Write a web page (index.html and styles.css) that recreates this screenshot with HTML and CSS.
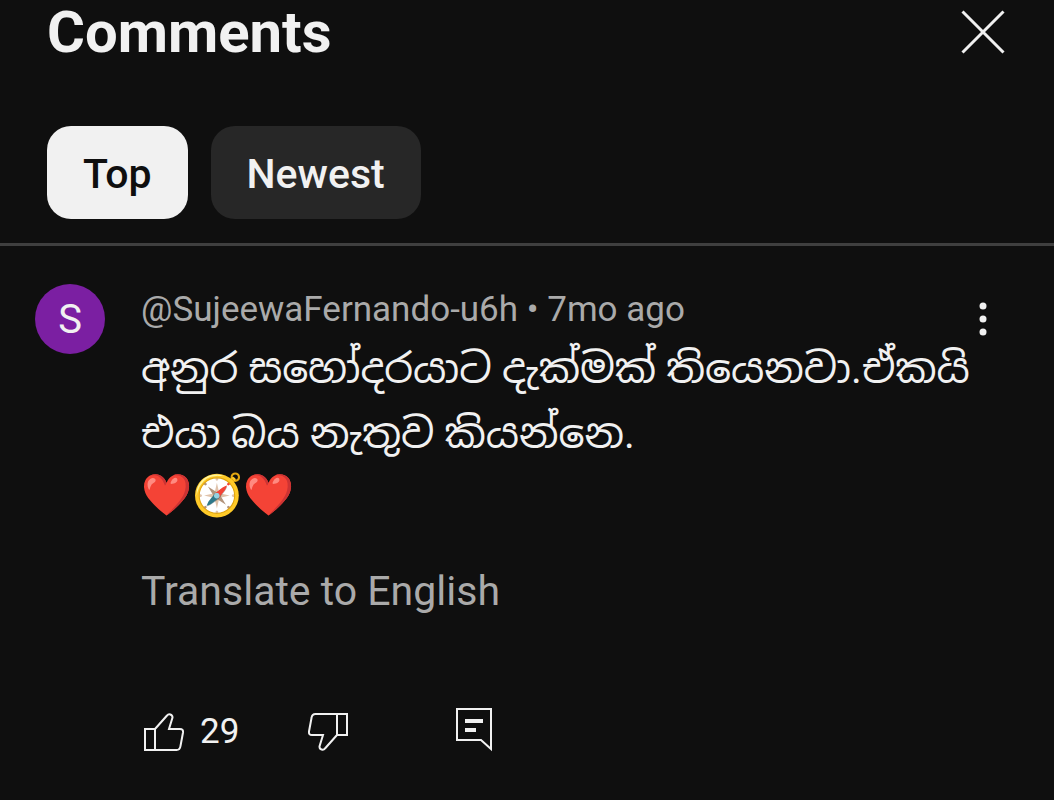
FILE: index.html
```html
<!DOCTYPE html>
<html lang="en">
<head>
    <meta charset="UTF-8">
    <meta name="viewport" content="width=device-width, initial-scale=1.0">
    <title>Comments</title>
    <link rel="stylesheet" href="styles.css">
</head>
<body>
    <header class="panel-header">
        <div class="title-row">
            <h1>Comments</h1>
            <button class="icon-button" aria-label="Close">
                <svg width="44" height="44" viewBox="0 0 44 44" fill="none" stroke="currentColor" stroke-width="3">
                    <path d="M1.5 1.5L42.5 42.5M42.5 1.5L1.5 42.5"/>
                </svg>
            </button>
        </div>
        <div class="chips">
            <button class="chip selected">Top</button>
            <button class="chip">Newest</button>
        </div>
    </header>

    <main>
        <article class="comment">
            <div class="avatar">S</div>
            <div class="comment-body">
                <p class="meta">@SujeewaFernando-u6h • 7mo ago</p>
                <p class="text" lang="si">අනුර සහෝදරයාට දැක්මක් තියෙනවා.ඒකයි<br>එයා බය නැතුව කියන්නෙ.</p>
                <p class="emoji">❤️🧭❤️</p>
                <button class="translate">Translate to English</button>
                <div class="actions">
                    <button class="action like" aria-label="Like, 29">
                        <svg width="40" height="38" viewBox="0 0 40 38" fill="none" stroke="currentColor" stroke-width="2">
                            <path d="M1 16H11V37H1ZM11 16L23 2.5C24.5 .5 28.5 1 28.5 4.5L25 16H36Q39.5 16 39 19.5L36.5 33Q36 37 32.5 37H11"/>
                        </svg>
                        <span>29</span>
                    </button>
                    <button class="action dislike" aria-label="Dislike">
                        <svg width="40" height="38" viewBox="0 0 40 38" fill="none" stroke="currentColor" stroke-width="2">
                            <path d="M39 22H29V1H39ZM29 22L17 35.5C15.5 37.5 11.5 37 11.5 33.5L15 22H4Q.5 22 1 18.5L3.5 5Q4 1 7.5 1H29"/>
                        </svg>
                    </button>
                    <button class="action reply" aria-label="Reply">
                        <svg width="36" height="44" viewBox="0 0 36 44" fill="none" stroke="currentColor" stroke-width="2">
                            <path d="M1 1H35V41L25 32H1Z"/>
                            <path d="M9 13H27M9 22H20" stroke-width="4"/>
                        </svg>
                    </button>
                </div>
            </div>
            <button class="icon-button more" aria-label="More options">
                <svg width="8" height="34" viewBox="0 0 8 34" fill="currentColor">
                    <circle cx="4" cy="4" r="3.5"/>
                    <circle cx="4" cy="17" r="3.5"/>
                    <circle cx="4" cy="30" r="3.5"/>
                </svg>
            </button>
        </article>
    </main>
</body>
</html>
```
FILE: styles.css
```css
* {
    box-sizing: border-box;
}

body {
    margin: 0;
    background: #0f0f0f;
    color: #f1f1f1;
    font-family: Roboto, "Noto Sans Sinhala", "Noto Sans", sans-serif;
}

h1,
p {
    margin: 0;
}

button {
    padding: 0;
    border: none;
    background: none;
    color: inherit;
    font: inherit;
    cursor: pointer;
}

svg {
    display: block;
}

.panel-header {
    padding: 0 49px 24px 47px;
    border-bottom: 3px solid #3f3f3f;
}

.title-row {
    display: flex;
    justify-content: space-between;
    align-items: center;
    height: 64px;
}

h1 {
    font-size: 58px;
    line-height: 62px;
    font-weight: 700;
}

.chips {
    display: flex;
    gap: 23px;
    margin-top: 62px;
}

.chip {
    height: 93px;
    padding: 3px 36px 0;
    border-radius: 24px;
    background: #272727;
    font-size: 41px;
    font-weight: 500;
}

.chip.selected {
    background: #f1f1f1;
    color: #0f0f0f;
}

.comment {
    display: flex;
    align-items: flex-start;
    padding: 38px 67px 48px 35px;
}

.avatar {
    flex: none;
    width: 70px;
    height: 70px;
    margin-right: 36px;
    border-radius: 50%;
    background: #7b1fa2;
    font-size: 40px;
    line-height: 72px;
    text-align: center;
}

.comment-body {
    flex: 1;
    min-width: 0;
}

.meta {
    color: #aaa;
    font-size: 35px;
    line-height: 52px;
}

.text {
    margin-top: 1px;
    font-size: 41px;
    line-height: 65px;
    white-space: nowrap;
}

.emoji {
    font-family: "Noto Color Emoji", sans-serif;
    font-size: 41px;
    line-height: 56px;
}

.translate {
    margin-top: 43px;
    color: #aaa;
    font-size: 41px;
    line-height: 50px;
}

.actions {
    display: flex;
    align-items: center;
    margin-top: 92px;
    padding-left: 3px;
}

.action {
    display: flex;
    align-items: center;
    gap: 16px;
    font-size: 35px;
}

.like,
.dislike {
    padding-top: 3px;
}

.dislike {
    margin-left: 69px;
}

.reply {
    margin-left: 108px;
}

.more {
    margin-top: 18px;
}
```
